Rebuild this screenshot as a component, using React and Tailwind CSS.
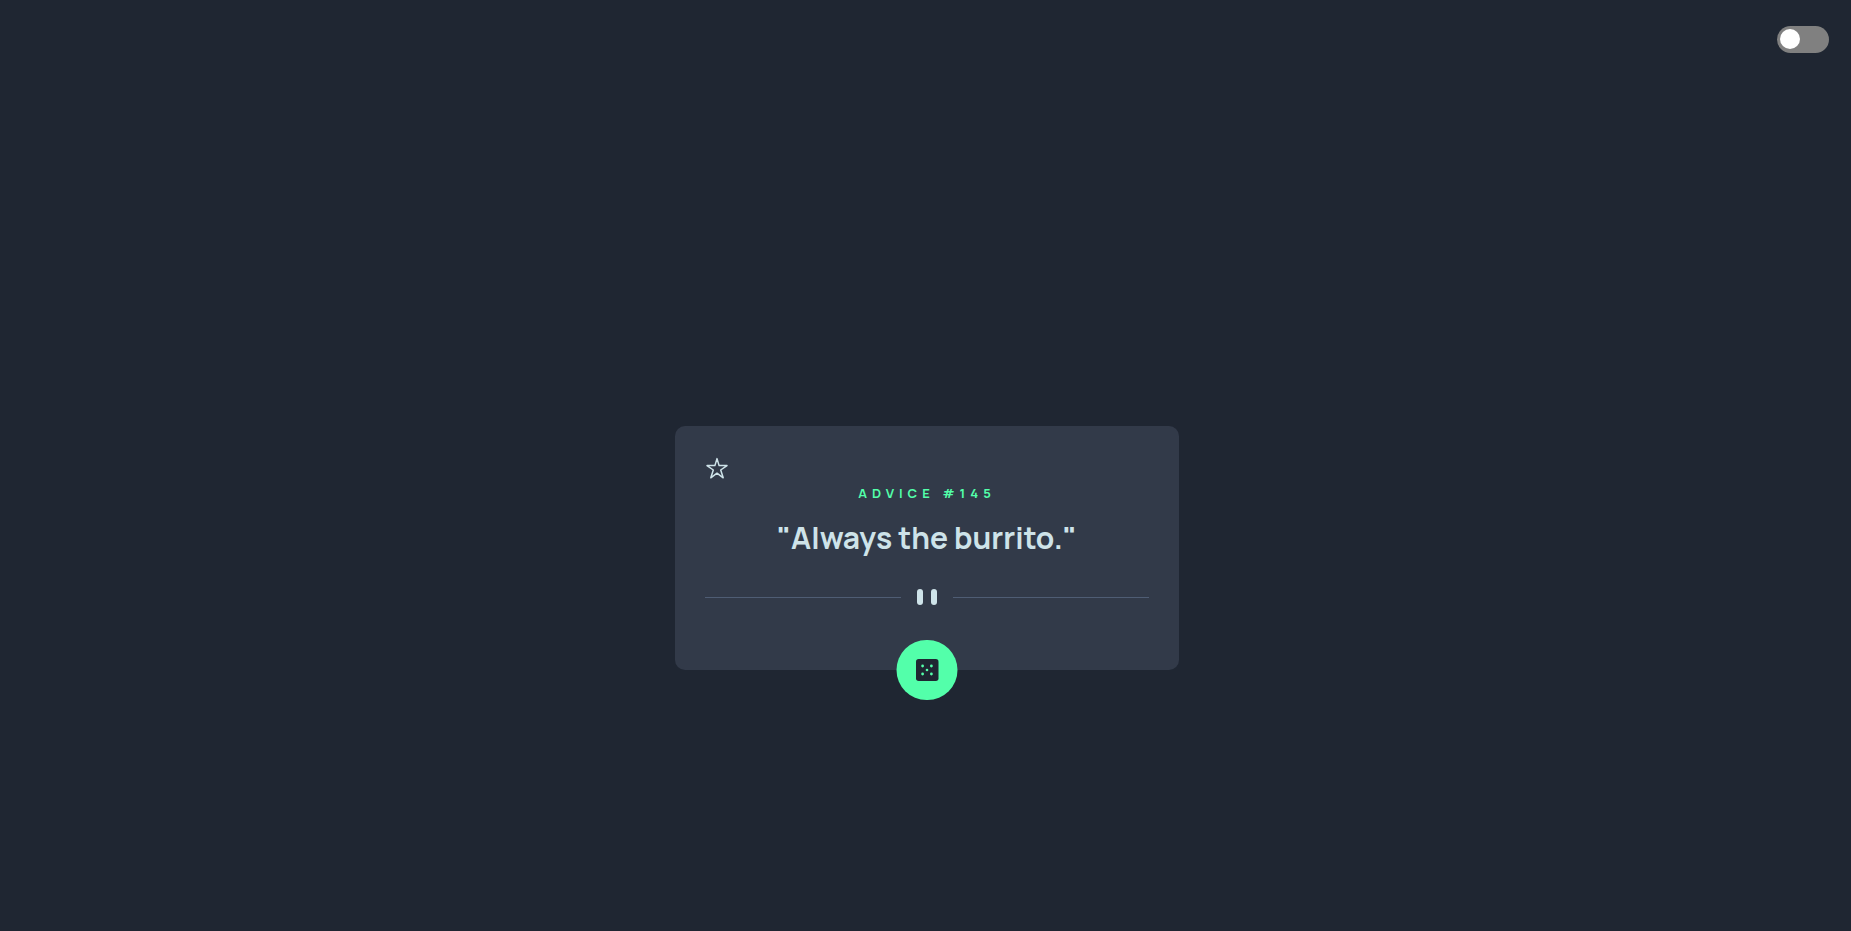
import { useState } from "react";

function FavouriteButton() {
  return (
    <button type="button" aria-label="Save advice" className="block cursor-pointer text-[#cee3e9]">
      <svg width="24" height="24" viewBox="0 0 24 24" fill="none" stroke="currentColor" strokeWidth="1.5" strokeLinejoin="round">
        <path d="M12 2.6 14.1 9.6H22L15.7 14 18.2 21.8 12 17.2 5.8 21.8 8.3 14 2 9.6H9.9Z" />
      </svg>
    </button>
  );
}

function Divider() {
  return (
    <div className="flex items-center gap-4">
      <span className="h-px flex-1 bg-[#4f5d74]" />
      <svg width="20" height="16" viewBox="0 0 20 16" fill="#cee3e9" aria-hidden="true">
        <rect width="6" height="16" rx="3" />
        <rect x="14" width="6" height="16" rx="3" />
      </svg>
      <span className="h-px flex-1 bg-[#4f5d74]" />
    </div>
  );
}

function DiceIcon() {
  return (
    <svg width="24" height="24" viewBox="0 0 24 24" aria-hidden="true">
      <rect x="0.5" y="1" width="22.5" height="22" rx="2.7" fill="#1f2632" />
      <g fill="#53ffaa">
        <circle cx="7.1" cy="8" r="1.4" />
        <circle cx="15.9" cy="8" r="1.4" />
        <circle cx="11.5" cy="12" r="1.3" />
        <circle cx="7.1" cy="16" r="1.4" />
        <circle cx="15.9" cy="16" r="1.4" />
      </g>
    </svg>
  );
}

export default function App() {
  const [light, setLight] = useState(false);

  return (
    <div className="flex min-h-screen flex-col bg-[#1f2632] font-['Manrope','Inter',sans-serif]">
      <header className="flex justify-end px-[22px] pt-[26px]">
        <label className="flex h-[27px] w-[52px] cursor-pointer items-start rounded-full bg-[#808080] p-[3px] has-checked:justify-end">
          <input
            type="checkbox"
            aria-label="Toggle theme"
            className="size-5 cursor-pointer appearance-none rounded-full bg-white"
            checked={light}
            onChange={(e) => setLight(e.target.checked)}
          />
        </label>
      </header>
      <main className="flex flex-1 items-center justify-center pt-[112px] pl-[3px]">
        <section className="relative w-full max-w-[504px] rounded-[10px] bg-[#323a49] px-[30px] pt-[30px] pb-[65px]">
          <FavouriteButton />
          <h1 className="mt-[3px] text-center text-[13px] leading-5 font-bold tracking-[5px] text-[#53ffaa]">ADVICE #145</h1>
          <p className="mt-3 mb-[29px] text-center text-[30px] leading-[45px] font-bold text-[#cee3e9]">"Always the burrito."</p>
          <Divider />
          <button
            type="button"
            aria-label="New advice"
            className="absolute -bottom-[30px] left-1/2 flex h-[60px] w-[61px] -translate-x-1/2 cursor-pointer items-center justify-center rounded-full bg-[#53ffaa]"
          >
            <DiceIcon />
          </button>
        </section>
      </main>
    </div>
  );
}
